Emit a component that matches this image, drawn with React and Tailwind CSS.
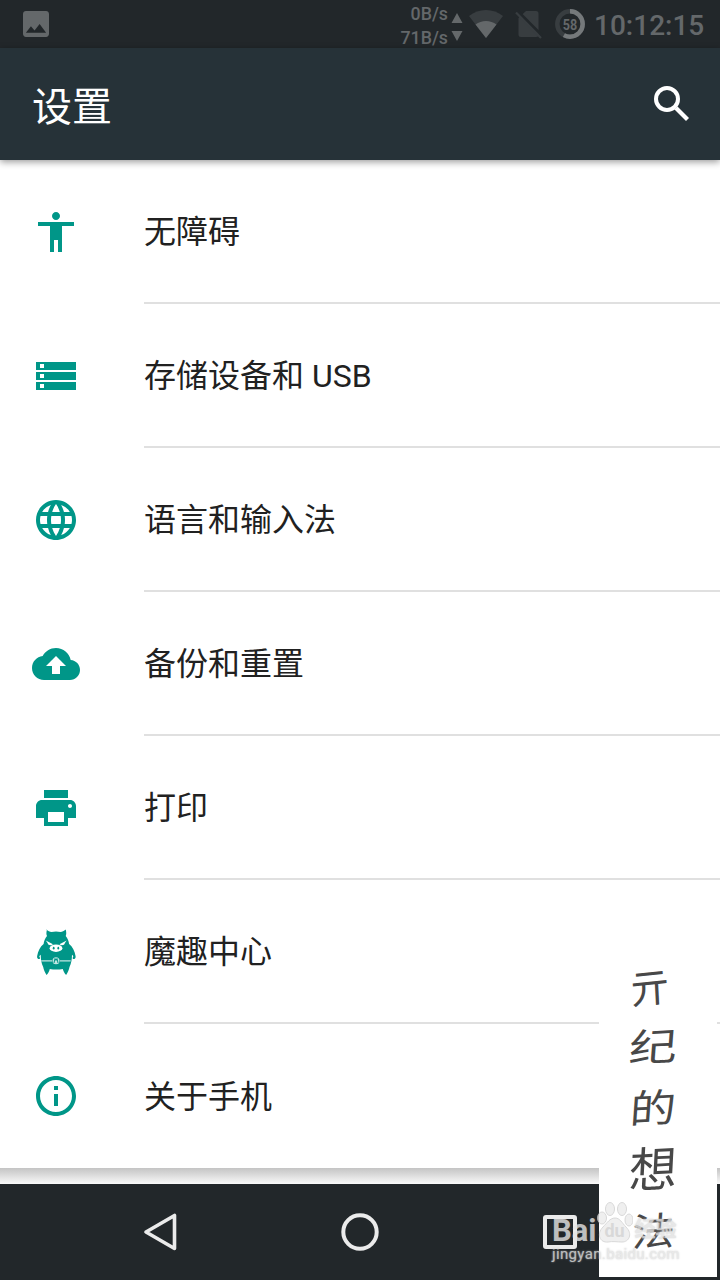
const ICONS = {
  accessibility: (
    <path d="M12 2c1.1 0 2 .9 2 2s-.9 2-2 2-2-.9-2-2 .9-2 2-2zm9 7h-6v13h-2v-6h-2v6H9V9H3V7h18v2z" />
  ),
  storage: (
    <path
      fillRule="evenodd"
      d="M2 5h20v4H2zM4 6v2h2V6zM2 10h20v4H2zM4 11v2h2v-2zM2 15h20v4H2zM4 16v2h2v-2z"
    />
  ),
  language: (
    <path d="M11.99 2C6.47 2 2 6.48 2 12s4.47 10 9.99 10C17.52 22 22 17.52 22 12S17.52 2 11.99 2zm6.93 6h-2.95c-.32-1.25-.78-2.45-1.38-3.56 1.84.63 3.37 1.91 4.33 3.56zM12 4.04c.83 1.2 1.48 2.53 1.91 3.96h-3.82c.43-1.43 1.08-2.76 1.91-3.96zM4.26 14C4.1 13.36 4 12.69 4 12s.1-1.36.26-2h3.38c-.08.66-.14 1.32-.14 2 0 .68.06 1.34.14 2H4.26zm.82 2h2.95c.32 1.25.78 2.45 1.38 3.56-1.84-.63-3.37-1.9-4.33-3.56zm2.95-8H5.08c.96-1.66 2.49-2.93 4.33-3.56C8.81 5.55 8.35 6.75 8.03 8zM12 19.96c-.83-1.2-1.48-2.53-1.91-3.96h3.82c-.43 1.43-1.08 2.76-1.91 3.96zM14.34 14H9.66c-.09-.66-.16-1.32-.16-2 0-.68.07-1.35.16-2h4.68c.09.65.16 1.32.16 2 0 .68-.07 1.34-.16 2zm.25 5.56c.6-1.11 1.06-2.31 1.38-3.56h2.95c-.96 1.65-2.49 2.93-4.33 3.56zM16.36 14c.08-.66.14-1.32.14-2 0-.68-.06-1.34-.14-2h3.38c.16.64.26 1.31.26 2s-.1 1.36-.26 2h-3.38z" />
  ),
  backup: (
    <path d="M19.35 10.04C18.67 6.59 15.64 4 12 4 9.11 4 6.6 5.64 5.35 8.04 2.34 8.36 0 10.91 0 14c0 3.31 2.69 6 6 6h13c2.76 0 5-2.24 5-5 0-2.64-2.05-4.78-4.65-4.96zM14 13v4h-4v-4H7l5-5 5 5h-3z" />
  ),
  print: (
    <path d="M19 8H5c-1.66 0-3 1.34-3 3v6h4v4h12v-4h4v-6c0-1.66-1.34-3-3-3zm-3 11H8v-5h8v5zm3-7c-.55 0-1-.45-1-1s.45-1 1-1 1 .45 1 1-.45 1-1 1zm-1-9H6v4h12V3z" />
  ),
  pig: (
    <g transform="scale(.5)">
      <path d="M14.300 1.500c1.800 1.600 3.400 2.400 5.200 2.500 3-.7 6-.7 9 0 1.800-.1 3.400-.9 5.200-2.500.8 2.800.7 4.800 0 6.500 1.900 2.400 3 5 3.400 8 3.500 2.800 5.600 7 6.500 12.200.2 2-.6 3-2.700 2.800l-.2-1.500c1-.5.700-1.600-.7-2.800-.1 4.700-.7 8.800-2.500 12.300-.5 2.500-1.600 5.400-3.400 8-1.600-1.800-2.600-3.700-3.300-6-4 .8-9 .8-13 0-.6 2.300-1.600 4.200-3.200 6-1.800-2.600-2.900-5.500-3.400-8-1.800-3.500-2.400-7.600-2.500-12.300-1.400 1.200-1.900 2.300-.7 2.800l-.2 1.500c-2.100.2-2.900-.8-2.700-2.800.9-5.200 3-9.400 6.500-12.200.4-3 1.500-5.600 3.400-8-.8-1.700-.8-3.700 0-6.500z" />
      <g fill="#fff">
        <path d="M13.800 12.600l7.200 3.700c-2 1.500-5 1-5.400-1.400zM34.700 12.600l-7.200 3.700c2 1.500 5 1 5.400-1.400z" />
        <ellipse cx="24" cy="20.200" rx="6.400" ry="3.700" />
        <path d="M9.200 32.200H20v1.200H9.400zM28 32.200h10.800l-.2 1.200H28z" opacity=".75" />
        <circle cx="24" cy="32.700" r="3.500" opacity=".75" />
      </g>
      <ellipse cx="21.700" cy="20.200" rx=".9" ry="1.400" />
      <ellipse cx="26.300" cy="20.200" rx=".9" ry="1.400" />
      <path d="M22 35l1-4.500 1 2 1-2 1 4.500" fill="none" stroke="#009688" strokeWidth="1" />
    </g>
  ),
  info: (
    <path d="M11 17h2v-6h-2v6zm1-15C6.480 2 2 6.480 2 12s4.480 10 10 10 10-4.480 10-10S17.520 2 12 2zm0 18c-4.410 0-8-3.590-8-8s3.590-8 8-8 8 3.590 8 8-3.590 8-8 8zM11 9h2V7h-2v2z" />
  ),
};

const ITEMS = [
  { icon: "accessibility", label: "无障碍" },
  { icon: "storage", label: "存储设备和 USB" },
  { icon: "language", label: "语言和输入法" },
  { icon: "backup", label: "备份和重置" },
  { icon: "print", label: "打印" },
  { icon: "pig", label: "魔趣中心" },
  { icon: "info", label: "关于手机" },
];

function StatusBar() {
  return (
    <div className="flex h-12 items-center bg-[#22272a] pr-[17px] pl-[23px] text-[#64686a]">
      <svg className="h-[26px] w-[26px]" viewBox="3 3 18 18" fill="currentColor">
        <path d="M21 19V5c0-1.100-.9-2-2-2H5c-1.100 0-2 .9-2 2v14c0 1.100.9 2 2 2h14c1.100 0 2-.9 2-2zM8.500 13.500l2.500 3.010L14.500 12l4.500 6H5l3.500-4.500z" />
      </svg>
      <div className="ml-auto flex items-center">
        <div className="pt-1 text-right text-[17.8px] leading-6 font-medium">
          <div>0B/s</div>
          <div>71B/s</div>
        </div>
        <svg className="ml-[3px] h-12 w-3" viewBox="0 0 12 48" fill="currentColor">
          <path d="M6 13l5.500 10H.5zM6 41L.5 31h11z" />
        </svg>
        <svg className="ml-1.5 h-12 w-[34px]" viewBox="0 0 34 48">
          <path d="M0 16C9.500 8 24.500 8 34 16L17 38z" fill="#383d40" />
          <path d="M6.500 24.500c6-4.700 15-4.700 21 0L17 38z" fill="currentColor" />
        </svg>
        <svg className="ml-3 h-12 w-[28px]" viewBox="0 0 28 48">
          <path d="M11 11h10a2.500 2.500 0 0 1 2.500 2.500v21A2.500 2.500 0 0 1 21 37H6a2.500 2.500 0 0 1-2.500-2.500V18z" fill="#383d40" />
          <path d="M2.500 11L28 36.500" stroke="#22272a" strokeWidth="3" />
          <path d="M1 12.500L26 38" stroke="#383d40" strokeWidth="2.200" />
        </svg>
        <div className="relative ml-3 flex h-[30px] w-[30px] items-center justify-center">
          <svg className="absolute inset-0" viewBox="0 0 30 30" fill="none" strokeWidth="4.500">
            <circle cx="15" cy="15" r="12.700" stroke="#383d40" />
            <circle
              cx="15"
              cy="15"
              r="12.700"
              stroke="#75797b"
              pathLength="100"
              strokeDasharray="58 42"
              transform="rotate(-90 15 15)"
            />
          </svg>
          <span className="scale-x-90 pt-0.5 text-[14px] leading-none font-bold">58</span>
        </div>
        <span className="ml-[9px] w-[109px] pt-[3px] text-[28px] leading-none font-medium">10:12:15</span>
      </div>
    </div>
  );
}

function AppBar() {
  return (
    <header className="relative flex h-28 items-center justify-between bg-[#263238] pr-6 pl-8 shadow-[0_2px_7px_rgba(0,0,0,0.4)]">
      <h1 className="pt-[7px] text-[40px] leading-none text-white">设置</h1>
      <svg className="h-12 w-12" viewBox="0 0 48 48" fill="none" stroke="#fff" strokeWidth="4">
        <circle cx="19" cy="19" r="11" />
        <path d="M28 28l11.500 11.500" strokeWidth="4.200" />
      </svg>
    </header>
  );
}

function SettingRow({ icon, label, last }) {
  return (
    <li className="flex h-36 items-center pl-8">
      <svg className="h-12 w-12 shrink-0" viewBox="0 0 24 24" fill="#009688">
        {ICONS[icon]}
      </svg>
      <div
        className={
          last
            ? "ml-16 flex h-full flex-1 items-center pt-0.5 text-[32px]"
            : "ml-16 flex h-full flex-1 items-center border-b-2 border-[#e0e0e0] pt-px text-[32px]"
        }
      >
        {label}
      </div>
    </li>
  );
}

function NavBar() {
  return (
    <nav className="flex h-24 items-center justify-center gap-[152px] bg-[#22272a]">
      <svg className="h-12 w-12" viewBox="0 0 48 48" fill="none" stroke="#ebebeb" strokeWidth="3.600" strokeLinejoin="round">
        <path d="M38.500 7.500v33L10 24z" />
      </svg>
      <svg className="h-12 w-12" viewBox="0 0 48 48" fill="none" stroke="#ebebeb" strokeWidth="4">
        <circle cx="24" cy="24" r="16.700" />
      </svg>
      <svg className="h-12 w-12" viewBox="0 0 48 48" fill="none" stroke="#ebebeb" strokeWidth="4">
        <rect x="9" y="9" width="30" height="30" rx="1" />
      </svg>
    </nav>
  );
}

// Signature card that floats over the list and the navigation bar
function Signature() {
  return (
    <div className="absolute top-[960px] left-[599px] flex h-[317px] w-[118px] flex-col items-center bg-white pr-2.5 text-[#484848]">
      <span className="-skew-x-3 -rotate-6 pr-1.5 text-[40px] leading-[58px]">亓</span>
      <span className="-skew-x-6 -rotate-3 scale-y-80 text-[48px] leading-[60px]">纪</span>
      <span className="-skew-x-6 -rotate-3 scale-y-85 text-[46px] leading-[62px]">的</span>
      <span className="-skew-x-6 -rotate-3 text-[48px] leading-[62px]">想</span>
      <span className="-skew-x-6 -rotate-3 scale-y-90 text-[43px] leading-[60px]">法</span>
    </div>
  );
}

function Watermark() {
  return (
    <div className="absolute top-[1200px] left-[552px] w-[130px] text-[#e4e4e4] opacity-80">
      <div className="flex h-[44px] items-end">
        <span className="text-[31px] leading-[26px] font-bold">Bai</span>
        <div className="relative h-[43px] w-[36px]">
          <svg className="absolute inset-0" viewBox="0 0 36 43" fill="#ececec" stroke="#d0d0d0">
            <ellipse cx="5" cy="17" rx="4.500" ry="6" />
            <ellipse cx="13" cy="8" rx="4.500" ry="6.500" />
            <ellipse cx="25" cy="8" rx="4.500" ry="6.500" />
            <ellipse cx="32" cy="19" rx="4" ry="6" />
            <path d="M18 17c5 0 7 5 11 9 7 7 3 15-4 15-4 0-10-1-14 0-8 1-12-8-5-15 4-4 7-9 12-9z" />
          </svg>
          <span className="absolute inset-x-0 bottom-1 text-center text-[18px] leading-none font-bold text-[#cfcfcf]">
            du
          </span>
        </div>
        <span className="ml-0.5 text-[21px] leading-[30px] font-bold text-[#e2e2e2] [text-shadow:0_0_2px_#ccc]">经验</span>
      </div>
      <div className="mt-px text-[15px] leading-[18px] tracking-[0.35px] [text-shadow:0_0_2px_#bbb]">
        jingyan.baidu.com
      </div>
    </div>
  );
}

export default function App() {
  return (
    <div className="relative flex h-[1280px] w-[720px] flex-col overflow-hidden bg-white font-[Roboto,'Noto_Sans_CJK_SC',sans-serif] text-[#212121]">
      <StatusBar />
      <AppBar />
      <ul>
        {ITEMS.map((item, i) => (
          <SettingRow key={item.label} {...item} last={i === ITEMS.length - 1} />
        ))}
      </ul>
      <div className="h-4 bg-gradient-to-b from-[#c4c4c4] to-[#fafafa]" />
      <NavBar />
      <Signature />
      <Watermark />
    </div>
  );
}
